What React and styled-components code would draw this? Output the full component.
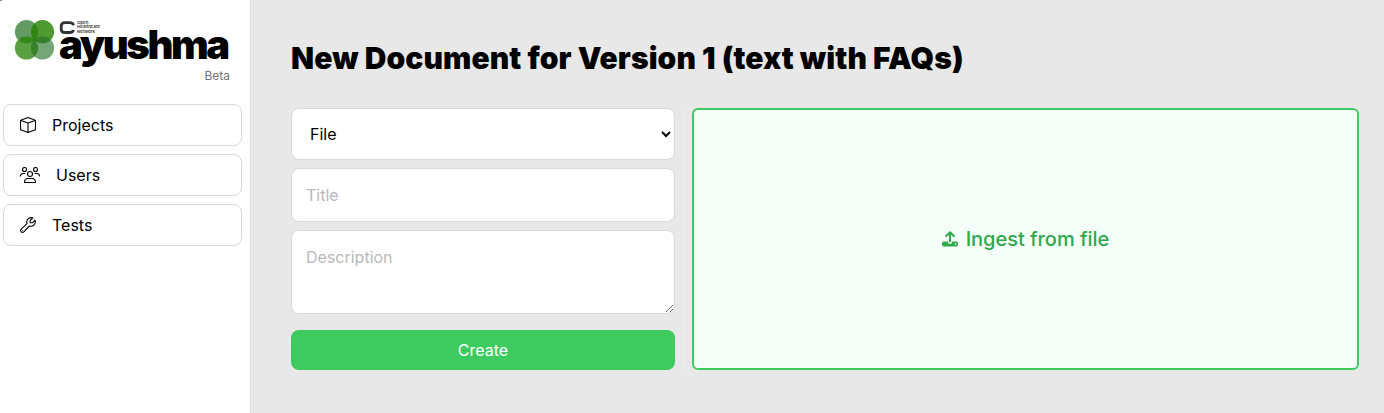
import React from "react";
import styled, { createGlobalStyle } from "styled-components";

const Global = createGlobalStyle`
  *, *::before, *::after { box-sizing: border-box; }
  body { margin: 0; background: #e8e8e8; color: #000; font-family: Inter, "Liberation Sans", sans-serif; font-size: 16px; line-height: 24px; overflow: hidden; }
  button, input, select, textarea { font: inherit; margin: 0; }
`;
const Page = styled.div`display: flex; height: 413px;`;
const Sidebar = styled.aside`
  position: relative;
  width: 251px; flex: none; background: #fff; border-right: 1px solid #dcdcdc;
  display: flex; flex-direction: column; padding: 19px 8px 0 3px;
  &::before { content: ""; position: absolute; left: 0; top: 0; width: 2px; height: 1px; background: #8a8a8a; }
`;
const Brand = styled.div`display: flex; height: 49px; padding-left: 11px;`;
const Clover = styled.svg`width: 41px; height: 42px; flex: none;`;
const BrandText = styled.div`display: flex; flex-direction: column; margin-left: 4px; padding-top: 1px;`;
const Network = styled.div`display: flex; height: 14px; gap: 1px;`;
const NetworkName = styled.div`
  font-size: 3.8px; line-height: 4.4px; font-weight: 600; white-space: pre; color: #333;
  padding-top: 1px; transform: scaleX(1.15); transform-origin: 0 0;
`;
const Wordmark = styled.div`
  font-size: 40px; line-height: 24px; font-weight: 900; letter-spacing: -2.4px; margin-top: -1px;
`;
const Beta = styled.div`font-size: 12px; line-height: 16px; color: #737373; text-align: right; padding-right: 12px;`;
const Nav = styled.nav`display: flex; flex-direction: column; gap: 8px; margin-top: 20px;`;
const NavItem = styled.a`
  display: flex; align-items: center; height: 42px; padding-left: 16px; gap: 16px;
  border: 1px solid #d9d9d9; border-radius: 8px; background: #fff;
`;
const NavIcon = styled.svg`
  width: ${(p) => p.$w}px; height: 16px; flex: none; fill: none; stroke: #000; stroke-width: 1.1;
  stroke-linecap: round; stroke-linejoin: round;
`;
const Main = styled.main`flex: 1; padding: 40px 25px 0 40px;`;
const Heading = styled.h1`margin: 0 0 32px; font-size: 30px; line-height: 36px; font-weight: 900; letter-spacing: 0.09px;`;
const Columns = styled.div`display: flex; height: 262px;`;
const Form = styled.form`width: 384px; display: flex; flex-direction: column;`;
const Select = styled.select`
  height: 52px; padding: 0 2px 0 14px; border: 1px solid #d9d9d9; border-radius: 8px; background: #fff; color: #000;
`;
const Input = styled.input`
  height: 54px; margin-top: 8px; padding: 0 14px; border: 1px solid #d9d9d9; border-radius: 8px; background: #fff;
  &::placeholder { color: #b9b9b9; }
`;
const Area = styled.textarea`
  height: 84px; margin-top: 8px; padding: 14px; border: 1px solid #d9d9d9; border-radius: 8px; background: #fff;
  &::placeholder { color: #b9b9b9; }
`;
const Create = styled.button`
  height: 40px; margin-top: 16px; border: 0; border-radius: 8px; background: #3dcb5f; color: #fff;
`;
const Divider = styled.div`width: 1px; margin: 0 8px; background: #eee;`;
const Drop = styled.div`
  flex: 1; display: flex; align-items: center; justify-content: center; gap: 8px;
  border: 2px solid #3dcb5f; border-radius: 6px; background: #f5fff9;
  color: #2fa84c; font-size: 20px; line-height: 28px; font-weight: 500; letter-spacing: -0.03px;
`;

export default function App() {
  return (
    <>
      <Global />
      <Page>
        <Sidebar>
          <Brand>
            <Clover viewBox="0 0 41 42">
              <circle cx="12.5" cy="12.7" r="11.6" fill="#226f22" fillOpacity=".7" />
              <circle cx="28.5" cy="12.7" r="11.6" fill="#238000" fillOpacity=".8" />
              <circle cx="12.5" cy="29" r="11.6" fill="#238000" fillOpacity=".75" />
              <circle cx="28.5" cy="29" r="11.6" fill="#226f22" fillOpacity=".62" />
            </Clover>
            <BrandText>
              <Network>
                <svg width="17" height="15" viewBox="0 0 17 15" fill="none" stroke="#333" strokeWidth="2.8">
                  <path d="M14.5 5.2Q14 2.7 10.5 2.7H6Q2.2 2.7 2.2 6V9.2Q2.2 12.5 6 12.5H10.5Q14 12.5 14.5 10" />
                </svg>
                <NetworkName>{"Open\nHealthcare\nNetwork"}</NetworkName>
              </Network>
              <Wordmark>ayushma</Wordmark>
            </BrandText>
          </Brand>
          <Beta>Beta</Beta>
          <Nav>
            <NavItem>
              <NavIcon $w={16} viewBox="0 0 16 16">
                <path d="M8 .6 14.7 2.9Q15.5 3.2 15.5 4V12Q15.5 12.8 14.7 13.1L8 15.5 1.3 13.1Q.5 12.8 .5 12V4Q.5 3.2 1.3 2.9ZM.9 3.5 8 6.1 15.1 3.5M8 6.1V15.4" />
              </NavIcon>
              Projects
            </NavItem>
            <NavItem>
              <NavIcon $w={20} viewBox="0 0 20 16">
                <circle cx="4.5" cy="2.5" r="2" /><circle cx="15.5" cy="2.5" r="2" /><circle cx="10" cy="7" r="2.5" />
                <path d="M.5 9Q.5 6.5 3 6.5H5M19.5 9Q19.5 6.5 17 6.5H15M4.5 15.5Q4.5 11.5 8 11.5H12Q15.5 11.5 15.5 15.5Z" />
              </NavIcon>
              Users
            </NavItem>
            <NavItem>
              <NavIcon $w={16} viewBox="0 0 16 16">
                <path d="M12.8.9 10.2 3.5V5.8H12.5L15.1 3.2C16.1 6.7 13.4 10.1 9.4 9L3.8 14.8Q2.4 16 1.2 14.8 0 13.6 1.2 12.2L7 6.6C5.9 2.6 9.3-.1 12.8.9Z" />
                <path d="M2.7 13.2v.1" />
              </NavIcon>
              Tests
            </NavItem>
          </Nav>
        </Sidebar>
        <Main>
          <Heading>New Document for Version 1 (text with FAQs)</Heading>
          <Columns>
            <Form>
              <Select><option>File</option></Select>
              <Input placeholder="Title" />
              <Area placeholder="Description" />
              <Create type="button">Create</Create>
            </Form>
            <Divider />
            <Drop>
              <svg width="16" height="16" viewBox="0 0 16 16">
                <path d="M8 10.5V1.8M4.2 5 8 1.3 11.8 5" fill="none" stroke="#2fa84c" strokeWidth="2" strokeLinecap="round" strokeLinejoin="round" />
                <path fillRule="evenodd" fill="#2fa84c" d="M1.8 10.6H6V10.9a2 2 0 0 0 4 0V10.6H14.2a1.8 1.8 0 0 1 1.8 1.8v1.4a1.8 1.8 0 0 1-1.8 1.8H1.8a1.8 1.8 0 0 1-1.8-1.8v-1.4a1.8 1.8 0 0 1 1.8-1.8Zm11.7 1.7a.8.8 0 1 0 0 1.6.8.8 0 0 0 0-1.6Z" />
              </svg>
              Ingest from file
            </Drop>
          </Columns>
        </Main>
      </Page>
    </>
  );
}
